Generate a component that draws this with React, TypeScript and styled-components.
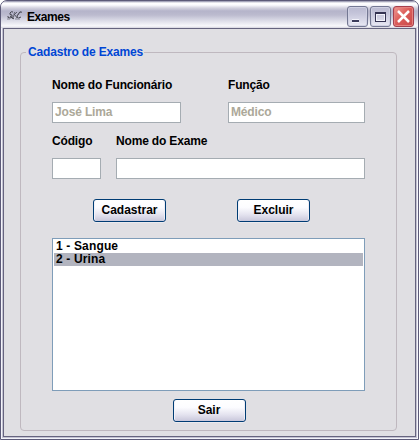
import React from "react";
import styled, { createGlobalStyle } from "styled-components";

const GlobalStyle = createGlobalStyle`
  * { box-sizing: border-box; }
  body {
    margin: 0;
    background: #fff;
    font: bold 12px/13px "Liberation Sans", Arial, sans-serif;
    color: #000;
    overflow: hidden;
  }
`;

const Window = styled.main`
  width: 419px;
  height: 440px;
  display: flex;
  flex-direction: column;
  border: 1px solid #5c5a78;
  border-radius: 7px 7px 0 0;
  background: #c3c2d2;
  padding: 0 2px 2px;
  box-shadow: inset 1px 0 #f4f4fa, inset -1px 0 #f4f4fa, inset 0 -1px #f4f4fa;
`;

const TitleBar = styled.header`
  height: 27px;
  margin: 0 -2px;
  padding: 4px 4px 0 5px;
  display: flex;
  align-items: flex-start;
  border-radius: 6px 6px 0 0;
  background: linear-gradient(#8988a4 0, #fff 2px, #fafafd 4px, #d2d1de 7px, #b5b4ca 10px, #bcbbcf 14px, #dedee9 20px, #f9f9fc 25px, #d5d4df 27px);
`;

const Title = styled.h1`
  flex: 1;
  margin: 6px 0 0 4px;
  font-size: 12px;
  line-height: 13px;
  letter-spacing: -0.45px;
`;

const Controls = styled.div`
  display: flex;
  gap: 2px;
  margin-top: 1px;
`;

const ControlButton = styled.button<{ $danger?: boolean }>`
  width: 21px;
  height: 21px;
  padding: 0;
  display: block;
  border: 1px solid ${(p) => (p.$danger ? "#a63f4d" : "#747893")};
  border-radius: 3px;
  background: ${(p) =>
    p.$danger
      ? "linear-gradient(135deg, #ef9a94, #dc5d5a 45%, #c94a4b)"
      : "linear-gradient(#b9b9d0, #c5c5da 35%, #e9e9f4)"};
  box-shadow: inset 0 0 0 1px ${(p) => (p.$danger ? "#e5827f" : "#cfd0e2")};
  svg { display: block; }
`;

const Client = styled.section`
  flex: 1;
  border: 1px solid #66647f;
  background: #e0dfe3;
  padding: 23px 18px 5px 16px;
`;

const Group = styled.fieldset`
  width: 377px;
  height: 379px;
  margin: 0;
  padding: 0 31px;
  border: 1px solid #bfb8bf;
  border-radius: 4px;
  position: relative;
  min-width: 0;
`;

const Legend = styled.div`
  position: absolute;
  left: 5px;
  top: -7px;
  padding: 0 1px 0 2px;
  background: #e0dfe3;
  color: #0046d5;
  letter-spacing: -0.17px;
  white-space: nowrap;
`;

const Fields = styled.form`
  display: flex;
  flex-direction: column;
  padding-top: 26px;
`;

const FieldRow = styled.div<{ $columns: string; $gap: number }>`
  display: grid;
  grid-template-columns: ${(p) => p.$columns};
  column-gap: ${(p) => p.$gap}px;
  height: 56px;
`;

const Field = styled.label`
  display: flex;
  flex-direction: column;
  gap: 10px;
  letter-spacing: -0.17px;
  white-space: nowrap;
`;

const Input = styled.input`
  width: 100%;
  height: 21px;
  padding: 0 2px 1px;
  border: 1px solid #a5acb2;
  border-radius: 0;
  background: #fff;
  font: inherit;
  letter-spacing: -0.15px;
  color: #000;
  outline: 0;
  &:disabled { color: #aca899; }
`;

const Actions = styled.div`
  display: flex;
  gap: 71px;
  padding: 8px 0 16px 41px;
`;

const Button = styled.button`
  width: 73px;
  height: 23px;
  padding: 0;
  border: 1px solid #003c74;
  border-radius: 3px;
  background: linear-gradient(#fff, #fcfcff 35%, #e4e3ef 70%, #c9c7db);
  box-shadow: inset 1px 0 #f2f2f9, inset -1px 0 #eeedf5, 0 1px #ebeaee;
  font: inherit;
  color: #000;
`;

const List = styled.ul`
  list-style: none;
  margin: 0;
  height: 153px;
  padding: 1px;
  border: 1px solid #7f9db9;
  background: #fff;
`;

const Item = styled.li<{ $selected?: boolean }>`
  height: 13px;
  padding-left: 2px;
  letter-spacing: 0.15px;
  background: ${(p) => (p.$selected ? "#b2b4bf" : "transparent")};
`;

const Footer = styled.div`
  display: flex;
  justify-content: center;
  padding: 8px 0 0 1px;
`;

const AppIcon = () => (
  <svg width="17" height="18" viewBox="0 0 17 18" fill="none" stroke="#464650">
    <path d="M7 7Q5 6 4 8T6 10Q7 13 4 13T2 11M4 11L8 14" />
    <path d="M9 7Q8 8 8 10T6 14M8 10L11 7M9 10L11 13" opacity=".8" />
    <path d="M15 8Q16 6 14 7Q12 8 13 9Q11 9 11 12Q12 14 15 12" />
    <path d="M1 14H4M9 14H14" stroke="#858592" />
  </svg>
);

const App = () => (
  <>
    <GlobalStyle />
    <Window>
      <TitleBar>
        <AppIcon />
        <Title>Exames</Title>
        <Controls>
          <ControlButton aria-label="Minimizar">
            <svg width="19" height="19" shapeRendering="crispEdges"><path d="M4 12h7v4H4z" fill="#f2f2fa" /><path d="M4 13h7v2H4z" fill="#3b3b5b" /></svg>
          </ControlButton>
          <ControlButton aria-label="Maximizar">
            <svg width="19" height="19" shapeRendering="crispEdges"><path d="M4.5 5.5h10v9h-10zM4 6.5h11" fill="none" stroke="#343352" /><path d="M5.5 7.5h8v6h-8z" fill="none" stroke="#f2f2fa" /></svg>
          </ControlButton>
          <ControlButton $danger aria-label="Fechar">
            <svg width="19" height="19"><path d="M4 4l11 11M15 4l-11 11" stroke="#fff" strokeWidth="2.5" /></svg>
          </ControlButton>
        </Controls>
      </TitleBar>
      <Client>
        <Group>
          <Legend>Cadastro de Exames</Legend>
          <Fields>
            <FieldRow $columns="129px 137px" $gap={47}>
              <Field>Nome do Funcionário<Input disabled defaultValue="José Lima" /></Field>
              <Field>Função<Input disabled defaultValue="Médico" /></Field>
            </FieldRow>
            <FieldRow $columns="49px 249px" $gap={15}>
              <Field>Código<Input /></Field>
              <Field>Nome do Exame<Input /></Field>
            </FieldRow>
          </Fields>
          <Actions>
            <Button>Cadastrar</Button>
            <Button>Excluir</Button>
          </Actions>
          <List>
            <Item>1 - Sangue</Item>
            <Item $selected>2 - Urina</Item>
          </List>
          <Footer><Button>Sair</Button></Footer>
        </Group>
      </Client>
    </Window>
  </>
);

export default App;
